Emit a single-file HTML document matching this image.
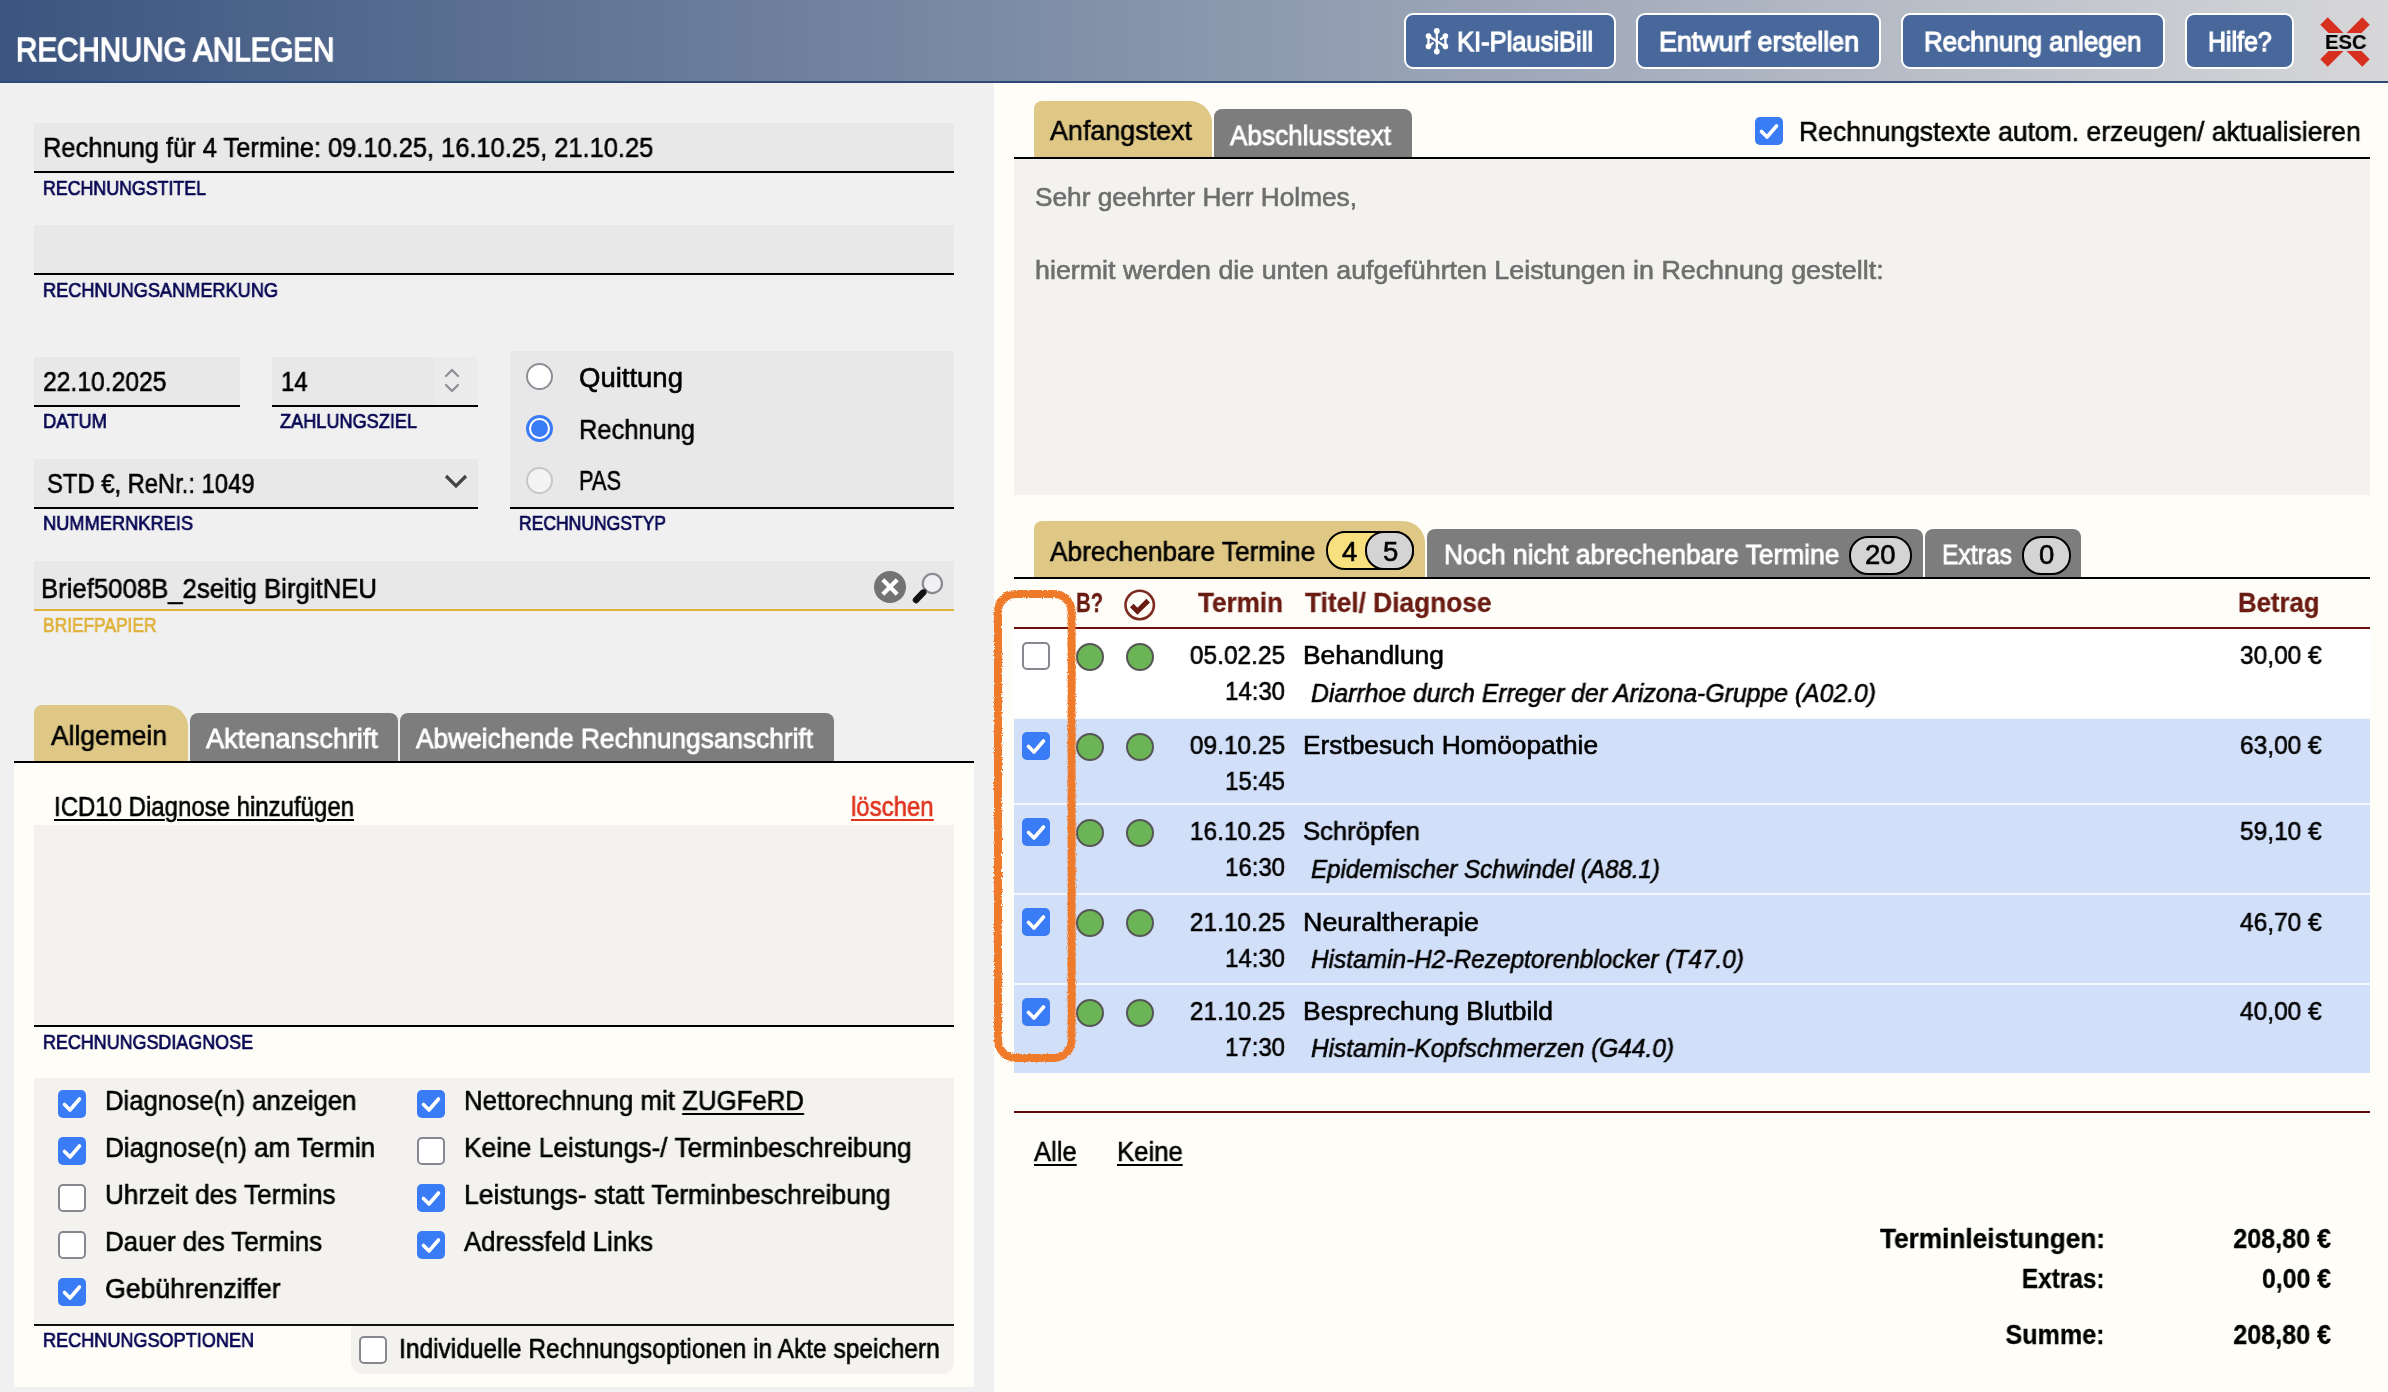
<!DOCTYPE html><html><head><meta charset="utf-8"><style>
html,body{margin:0;padding:0;width:2388px;height:1392px;overflow:hidden;font-family:"Liberation Sans",sans-serif;}
body{position:relative;background:#fefdf8;}
div{box-sizing:content-box;}
u{text-decoration:underline;text-decoration-thickness:2px;text-underline-offset:3px;}
</style></head><body>
<div style="position:absolute;left:0px;top:0px;width:2388px;height:81px;background:linear-gradient(90deg,#3b5580 0%,#d7d7d9 100%);"></div>
<div style="position:absolute;left:0px;top:81px;width:2388px;height:2px;background:#2d4a76;"></div>
<div style="position:absolute;left:15.8px;top:33.4px;font:normal 400 33.5px/33.5px 'Liberation Sans',sans-serif;color:#fff;white-space:pre;will-change:transform;transform:scaleX(0.8816);transform-origin:left center;-webkit-text-stroke:1.5px #fff;">RECHNUNG ANLEGEN</div>
<div style="position:absolute;left:1404px;top:13px;width:208px;height:52px;background:#48679a;border:2px solid #fff;border-radius:9px;"></div>
<div style="position:absolute;left:1457.0px;top:27.3px;font:normal 400 28.5px/28.5px 'Liberation Sans',sans-serif;color:#fff;white-space:pre;will-change:transform;transform:scaleX(0.8945);transform-origin:left center;-webkit-text-stroke:1.25px #fff;">KI-PlausiBill</div>
<div style="position:absolute;left:1636px;top:13px;width:241px;height:52px;background:#48679a;border:2px solid #fff;border-radius:9px;"></div>
<div style="position:absolute;left:1659.0px;top:27.3px;font:normal 400 28.5px/28.5px 'Liberation Sans',sans-serif;color:#fff;white-space:pre;will-change:transform;transform:scaleX(0.9422);transform-origin:left center;-webkit-text-stroke:1.25px #fff;">Entwurf erstellen</div>
<div style="position:absolute;left:1901px;top:13px;width:260px;height:52px;background:#48679a;border:2px solid #fff;border-radius:9px;"></div>
<div style="position:absolute;left:1924.3px;top:27.3px;font:normal 400 28.5px/28.5px 'Liberation Sans',sans-serif;color:#fff;white-space:pre;will-change:transform;transform:scaleX(0.9085);transform-origin:left center;-webkit-text-stroke:1.25px #fff;">Rechnung anlegen</div>
<div style="position:absolute;left:2185px;top:13px;width:105px;height:52px;background:#48679a;border:2px solid #fff;border-radius:9px;"></div>
<div style="position:absolute;left:2208.3px;top:27.3px;font:normal 400 28.5px/28.5px 'Liberation Sans',sans-serif;color:#fff;white-space:pre;will-change:transform;transform:scaleX(0.8729);transform-origin:left center;-webkit-text-stroke:1.25px #fff;">Hilfe?</div>
<svg style="position:absolute;left:1418px;top:22px" width="40" height="40" viewBox="0 0 40 40">
<g stroke="#fff" stroke-width="2.3" fill="none" stroke-linecap="round">
<path d="M18.8 9 L18.8 29.5"/><path d="M10.5 14.1 L10.5 24.4"/><path d="M27.4 14.1 L27.4 24.4"/><path d="M10.5 14.1 L27.4 24.4"/><path d="M10.5 24.4 L14.8 21.2"/><path d="M27.4 14.1 L23 17"/>
</g>
<g fill="#fff"><circle cx="18.8" cy="8.9" r="2.9"/><circle cx="18.8" cy="29.5" r="2.9"/><circle cx="10.5" cy="14.1" r="2.8"/><circle cx="27.4" cy="14.1" r="2.8"/><circle cx="10.5" cy="24.4" r="2.8"/><circle cx="27.4" cy="24.4" r="2.8"/></g>
</svg>
<svg style="position:absolute;left:2319px;top:16px" width="52" height="52" viewBox="0 0 52 52">
<path d="M5 5 L47 47 M47 5 L5 47" stroke="#d8301f" stroke-width="10.5"/>
</svg>
<div style="position:absolute;left:2322px;top:33px;width:46px;height:18px;background:#d4d4d7;"></div>
<div style="position:absolute;left:2324.6px;top:31.2px;font:normal 700 21px/21px 'Liberation Sans',sans-serif;color:#000;white-space:pre;will-change:transform;transform:scaleX(0.9611);transform-origin:left center;-webkit-text-stroke:0.2px #000;">ESC</div>
<div style="position:absolute;left:0px;top:83px;width:994px;height:1309px;background:#f0f0f1;"></div>
<div style="position:absolute;left:34px;top:123px;width:920px;height:48px;background:#e8e8e8;"></div>
<div style="position:absolute;left:34px;top:171px;width:920px;height:2px;background:#000;"></div>
<div style="position:absolute;left:42.6px;top:134.1px;font:normal 400 27.5px/27.5px 'Liberation Sans',sans-serif;color:#000;white-space:pre;will-change:transform;transform:scaleX(0.9246);transform-origin:left center;-webkit-text-stroke:0.6px #000;">Rechnung für 4 Termine: 09.10.25, 16.10.25, 21.10.25</div>
<div style="position:absolute;left:42.6px;top:177.8px;font:normal 400 20.5px/20.5px 'Liberation Sans',sans-serif;color:#050552;white-space:pre;will-change:transform;transform:scaleX(0.8673);transform-origin:left center;-webkit-text-stroke:0.7px #050552;">RECHNUNGSTITEL</div>
<div style="position:absolute;left:34px;top:225px;width:920px;height:48px;background:#e8e8e8;"></div>
<div style="position:absolute;left:34px;top:273px;width:920px;height:2px;background:#000;"></div>
<div style="position:absolute;left:42.6px;top:280.0px;font:normal 400 20.5px/20.5px 'Liberation Sans',sans-serif;color:#050552;white-space:pre;will-change:transform;transform:scaleX(0.8855);transform-origin:left center;-webkit-text-stroke:0.7px #050552;">RECHNUNGSANMERKUNG</div>
<div style="position:absolute;left:34px;top:357px;width:206px;height:48px;background:#e8e8e8;"></div>
<div style="position:absolute;left:34px;top:405px;width:206px;height:2px;background:#000;"></div>
<div style="position:absolute;left:42.5px;top:367.9px;font:normal 400 27.5px/27.5px 'Liberation Sans',sans-serif;color:#000;white-space:pre;will-change:transform;transform:scaleX(0.8973);transform-origin:left center;-webkit-text-stroke:0.6px #000;">22.10.2025</div>
<div style="position:absolute;left:42.6px;top:411.0px;font:normal 400 20.5px/20.5px 'Liberation Sans',sans-serif;color:#050552;white-space:pre;will-change:transform;transform:scaleX(0.8969);transform-origin:left center;-webkit-text-stroke:0.7px #050552;">DATUM</div>
<div style="position:absolute;left:272px;top:357px;width:206px;height:48px;background:#e8e8e8;"></div>
<div style="position:absolute;left:272px;top:405px;width:206px;height:2px;background:#000;"></div>
<div style="position:absolute;left:434px;top:357px;width:44px;height:48px;background:#ebebec;"></div>
<div style="position:absolute;left:281.0px;top:367.9px;font:normal 400 27.5px/27.5px 'Liberation Sans',sans-serif;color:#000;white-space:pre;will-change:transform;transform:scaleX(0.8761);transform-origin:left center;-webkit-text-stroke:0.6px #000;">14</div>
<svg style="position:absolute;left:444px;top:366px" width="16" height="30" viewBox="0 0 16 30"><path d="M2 10 L8 4 L14 10 M2 19 L8 25 L14 19" fill="none" stroke="#8d8d96" stroke-width="2.2" stroke-linecap="round" stroke-linejoin="round"/></svg>
<div style="position:absolute;left:280.3px;top:411.0px;font:normal 400 20.5px/20.5px 'Liberation Sans',sans-serif;color:#050552;white-space:pre;will-change:transform;transform:scaleX(0.8843);transform-origin:left center;-webkit-text-stroke:0.7px #050552;">ZAHLUNGSZIEL</div>
<div style="position:absolute;left:34px;top:459px;width:444px;height:48px;background:#e8e8e8;"></div>
<div style="position:absolute;left:34px;top:507px;width:444px;height:2px;background:#000;"></div>
<div style="position:absolute;left:46.5px;top:469.9px;font:normal 400 27.5px/27.5px 'Liberation Sans',sans-serif;color:#000;white-space:pre;will-change:transform;transform:scaleX(0.8647);transform-origin:left center;-webkit-text-stroke:0.6px #000;">STD €, ReNr.: 1049</div>
<svg style="position:absolute;left:443px;top:472px" width="26" height="20" viewBox="0 0 26 20"><path d="M3 4 L13 14 L23 4" fill="none" stroke="#444" stroke-width="3.2"/></svg>
<div style="position:absolute;left:42.6px;top:513.1px;font:normal 400 20.5px/20.5px 'Liberation Sans',sans-serif;color:#050552;white-space:pre;will-change:transform;transform:scaleX(0.8899);transform-origin:left center;-webkit-text-stroke:0.7px #050552;">NUMMERNKREIS</div>
<div style="position:absolute;left:510px;top:351px;width:444px;height:156px;background:#e8e8e8;"></div>
<div style="position:absolute;left:510px;top:507px;width:444px;height:2px;background:#000;"></div>
<div style="position:absolute;left:526px;top:363px;width:23px;height:23px;border:2px solid #8e8e96;border-radius:50%;background:#fff"></div>
<div style="position:absolute;left:526px;top:415px;width:21px;height:21px;border:3px solid #3a7bf6;border-radius:50%;background:#fff"><div style="position:absolute;left:2px;top:2px;width:17px;height:17px;border-radius:50%;background:#3a7bf6"></div></div>
<div style="position:absolute;left:526px;top:467px;width:23px;height:23px;border:2px solid #c6c6cb;border-radius:50%;background:#f4f4f4"></div>
<div style="position:absolute;left:578.8px;top:363.8px;font:normal 400 27.5px/27.5px 'Liberation Sans',sans-serif;color:#000;white-space:pre;will-change:transform;-webkit-text-stroke:0.6px #000;">Quittung</div>
<div style="position:absolute;left:578.8px;top:415.6px;font:normal 400 27.5px/27.5px 'Liberation Sans',sans-serif;color:#000;white-space:pre;will-change:transform;transform:scaleX(0.9252);transform-origin:left center;-webkit-text-stroke:0.6px #000;">Rechnung</div>
<div style="position:absolute;left:578.8px;top:467.3px;font:normal 400 27.5px/27.5px 'Liberation Sans',sans-serif;color:#000;white-space:pre;will-change:transform;transform:scaleX(0.7927);transform-origin:left center;-webkit-text-stroke:0.6px #000;">PAS</div>
<div style="position:absolute;left:519.0px;top:513.1px;font:normal 400 20.5px/20.5px 'Liberation Sans',sans-serif;color:#050552;white-space:pre;will-change:transform;transform:scaleX(0.8547);transform-origin:left center;-webkit-text-stroke:0.7px #050552;">RECHNUNGSTYP</div>
<div style="position:absolute;left:34px;top:561px;width:920px;height:48px;background:#e8e8e8;"></div>
<div style="position:absolute;left:34px;top:609px;width:920px;height:2px;background:#e0b038;"></div>
<div style="position:absolute;left:40.7px;top:575.1px;font:normal 400 27.5px/27.5px 'Liberation Sans',sans-serif;color:#000;white-space:pre;will-change:transform;transform:scaleX(0.9354);transform-origin:left center;-webkit-text-stroke:0.6px #000;">Brief5008B_2seitig BirgitNEU</div>
<svg style="position:absolute;left:873px;top:570px" width="34" height="34" viewBox="0 0 34 34"><circle cx="17" cy="17" r="16" fill="#737373"/><path d="M9.8 9.8 L24.2 24.2 M24.2 9.8 L9.8 24.2" stroke="#fff" stroke-width="4.2"/></svg>
<svg style="position:absolute;left:910px;top:570px" width="36" height="36" viewBox="0 0 36 36"><circle cx="22.4" cy="13.5" r="9.6" fill="#f1f1f4" stroke="#8a8a90" stroke-width="2.2"/><path d="M13.6 22.1 L16.3 19.4" stroke="#555" stroke-width="3"/><path d="M6 30 L13.2 22.6" stroke="#111" stroke-width="6.5" stroke-linecap="round"/></svg>
<div style="position:absolute;left:43.0px;top:615.3px;font:normal 400 20.5px/20.5px 'Liberation Sans',sans-serif;color:#e0b038;white-space:pre;will-change:transform;transform:scaleX(0.8468);transform-origin:left center;-webkit-text-stroke:0.7px #e0b038;">BRIEFPAPIER</div>
<div style="position:absolute;left:34px;top:705px;width:154px;height:56px;background:#dfc885;border-radius:8px 22px 0 0"></div>
<div style="position:absolute;left:50.5px;top:721.6px;font:normal 400 27.5px/27.5px 'Liberation Sans',sans-serif;color:#000;white-space:pre;will-change:transform;transform:scaleX(0.9606);transform-origin:left center;-webkit-text-stroke:0.6px #000;">Allgemein</div>
<div style="position:absolute;left:190px;top:713px;width:208px;height:48px;background:#7d7d7d;border-radius:8px 8px 0 0"></div>
<div style="position:absolute;left:205.8px;top:725.2px;font:normal 400 27.5px/27.5px 'Liberation Sans',sans-serif;color:#fff;white-space:pre;will-change:transform;transform:scaleX(0.9871);transform-origin:left center;-webkit-text-stroke:0.8px #fff;">Aktenanschrift</div>
<div style="position:absolute;left:400px;top:713px;width:434px;height:48px;background:#7d7d7d;border-radius:8px 8px 0 0"></div>
<div style="position:absolute;left:416.4px;top:725.2px;font:normal 400 27.5px/27.5px 'Liberation Sans',sans-serif;color:#fff;white-space:pre;will-change:transform;transform:scaleX(0.9547);transform-origin:left center;-webkit-text-stroke:0.8px #fff;">Abweichende Rechnungsanschrift</div>
<div style="position:absolute;left:14px;top:761px;width:960px;height:2px;background:#000;"></div>
<div style="position:absolute;left:14px;top:763px;width:960px;height:624px;background:#fefdf8;"></div>
<div style="position:absolute;left:54.2px;top:793.2px;font:normal 400 27.5px/27.5px 'Liberation Sans',sans-serif;color:#000;white-space:pre;will-change:transform;transform:scaleX(0.8721);transform-origin:left center;-webkit-text-stroke:0.6px #000;"><u>ICD10 Diagnose hinzufügen</u></div>
<div style="position:absolute;left:851.0px;top:793.4px;font:normal 400 27.5px/27.5px 'Liberation Sans',sans-serif;color:#e0341e;white-space:pre;will-change:transform;transform:scaleX(0.8704);transform-origin:left center;-webkit-text-stroke:0.6px #e0341e;"><u>löschen</u></div>
<div style="position:absolute;left:34px;top:825px;width:920px;height:200px;background:#f3f2ef;"></div>
<div style="position:absolute;left:34px;top:1025px;width:920px;height:2px;background:#000;"></div>
<div style="position:absolute;left:43.1px;top:1031.7px;font:normal 400 20.5px/20.5px 'Liberation Sans',sans-serif;color:#050552;white-space:pre;will-change:transform;transform:scaleX(0.8738);transform-origin:left center;-webkit-text-stroke:0.7px #050552;">RECHNUNGSDIAGNOSE</div>
<div style="position:absolute;left:34px;top:1078px;width:920px;height:246px;background:#f3f2ef;"></div>
<div style="position:absolute;left:34px;top:1324px;width:920px;height:2px;background:#111;"></div>
<div style="position:absolute;left:58px;top:1090.0px;width:28px;height:28px;background:#3a7bf6;border-radius:5px;"><svg width="28" height="28" viewBox="0 0 28 28" style="position:absolute;left:0;top:0"><path d="M6.5 14.5 L12 20 L21.5 9" fill="none" stroke="#fff" stroke-width="3.6" stroke-linecap="round" stroke-linejoin="round"/></svg></div>
<div style="position:absolute;left:104.8px;top:1087.2px;font:normal 400 27.5px/27.5px 'Liberation Sans',sans-serif;color:#000;white-space:pre;will-change:transform;transform:scaleX(0.9343);transform-origin:left center;-webkit-text-stroke:0.6px #000;">Diagnose(n) anzeigen</div>
<div style="position:absolute;left:58px;top:1137.0px;width:28px;height:28px;background:#3a7bf6;border-radius:5px;"><svg width="28" height="28" viewBox="0 0 28 28" style="position:absolute;left:0;top:0"><path d="M6.5 14.5 L12 20 L21.5 9" fill="none" stroke="#fff" stroke-width="3.6" stroke-linecap="round" stroke-linejoin="round"/></svg></div>
<div style="position:absolute;left:104.8px;top:1134.2px;font:normal 400 27.5px/27.5px 'Liberation Sans',sans-serif;color:#000;white-space:pre;will-change:transform;transform:scaleX(0.9468);transform-origin:left center;-webkit-text-stroke:0.6px #000;">Diagnose(n) am Termin</div>
<div style="position:absolute;left:58px;top:1184.0px;width:24px;height:24px;background:#fff;border:2px solid #878791;border-radius:5px;"></div>
<div style="position:absolute;left:104.8px;top:1181.2px;font:normal 400 27.5px/27.5px 'Liberation Sans',sans-serif;color:#000;white-space:pre;will-change:transform;transform:scaleX(0.9507);transform-origin:left center;-webkit-text-stroke:0.6px #000;">Uhrzeit des Termins</div>
<div style="position:absolute;left:58px;top:1231.0px;width:24px;height:24px;background:#fff;border:2px solid #878791;border-radius:5px;"></div>
<div style="position:absolute;left:104.8px;top:1228.2px;font:normal 400 27.5px/27.5px 'Liberation Sans',sans-serif;color:#000;white-space:pre;will-change:transform;transform:scaleX(0.9429);transform-origin:left center;-webkit-text-stroke:0.6px #000;">Dauer des Termins</div>
<div style="position:absolute;left:58px;top:1278.0px;width:28px;height:28px;background:#3a7bf6;border-radius:5px;"><svg width="28" height="28" viewBox="0 0 28 28" style="position:absolute;left:0;top:0"><path d="M6.5 14.5 L12 20 L21.5 9" fill="none" stroke="#fff" stroke-width="3.6" stroke-linecap="round" stroke-linejoin="round"/></svg></div>
<div style="position:absolute;left:104.8px;top:1275.2px;font:normal 400 27.5px/27.5px 'Liberation Sans',sans-serif;color:#000;white-space:pre;will-change:transform;transform:scaleX(0.9680);transform-origin:left center;-webkit-text-stroke:0.6px #000;">Gebührenziffer</div>
<div style="position:absolute;left:417px;top:1090.0px;width:28px;height:28px;background:#3a7bf6;border-radius:5px;"><svg width="28" height="28" viewBox="0 0 28 28" style="position:absolute;left:0;top:0"><path d="M6.5 14.5 L12 20 L21.5 9" fill="none" stroke="#fff" stroke-width="3.6" stroke-linecap="round" stroke-linejoin="round"/></svg></div>
<div style="position:absolute;left:463.8px;top:1087.2px;font:normal 400 27.5px/27.5px 'Liberation Sans',sans-serif;color:#000;white-space:pre;will-change:transform;transform:scaleX(0.9387);transform-origin:left center;-webkit-text-stroke:0.6px #000;">Nettorechnung mit <u>ZUGFeRD</u></div>
<div style="position:absolute;left:417px;top:1137.0px;width:24px;height:24px;background:#fff;border:2px solid #878791;border-radius:5px;"></div>
<div style="position:absolute;left:463.8px;top:1134.2px;font:normal 400 27.5px/27.5px 'Liberation Sans',sans-serif;color:#000;white-space:pre;will-change:transform;transform:scaleX(0.9577);transform-origin:left center;-webkit-text-stroke:0.6px #000;">Keine Leistungs-/ Terminbeschreibung</div>
<div style="position:absolute;left:417px;top:1184.0px;width:28px;height:28px;background:#3a7bf6;border-radius:5px;"><svg width="28" height="28" viewBox="0 0 28 28" style="position:absolute;left:0;top:0"><path d="M6.5 14.5 L12 20 L21.5 9" fill="none" stroke="#fff" stroke-width="3.6" stroke-linecap="round" stroke-linejoin="round"/></svg></div>
<div style="position:absolute;left:463.8px;top:1181.2px;font:normal 400 27.5px/27.5px 'Liberation Sans',sans-serif;color:#000;white-space:pre;will-change:transform;transform:scaleX(0.9666);transform-origin:left center;-webkit-text-stroke:0.6px #000;">Leistungs- statt Terminbeschreibung</div>
<div style="position:absolute;left:417px;top:1231.0px;width:28px;height:28px;background:#3a7bf6;border-radius:5px;"><svg width="28" height="28" viewBox="0 0 28 28" style="position:absolute;left:0;top:0"><path d="M6.5 14.5 L12 20 L21.5 9" fill="none" stroke="#fff" stroke-width="3.6" stroke-linecap="round" stroke-linejoin="round"/></svg></div>
<div style="position:absolute;left:463.8px;top:1228.2px;font:normal 400 27.5px/27.5px 'Liberation Sans',sans-serif;color:#000;white-space:pre;will-change:transform;transform:scaleX(0.9367);transform-origin:left center;-webkit-text-stroke:0.6px #000;">Adressfeld Links</div>
<div style="position:absolute;left:43.1px;top:1330.1px;font:normal 400 20.5px/20.5px 'Liberation Sans',sans-serif;color:#050552;white-space:pre;will-change:transform;transform:scaleX(0.8822);transform-origin:left center;-webkit-text-stroke:0.7px #050552;">RECHNUNGSOPTIONEN</div>
<div style="position:absolute;left:351px;top:1326px;width:603px;height:48px;background:#f3f2ef;border-radius:0 0 12px 12px"></div>
<div style="position:absolute;left:359px;top:1336.0px;width:24px;height:24px;background:#fff;border:2px solid #878791;border-radius:5px;"></div>
<div style="position:absolute;left:398.5px;top:1334.5px;font:normal 400 27.5px/27.5px 'Liberation Sans',sans-serif;color:#000;white-space:pre;will-change:transform;transform:scaleX(0.8908);transform-origin:left center;-webkit-text-stroke:0.6px #000;">Individuelle Rechnungsoptionen in Akte speichern</div>
<div style="position:absolute;left:1034px;top:101px;width:178px;height:57px;background:#dfc885;border-radius:8px 22px 0 0"></div>
<div style="position:absolute;left:1050.0px;top:117.3px;font:normal 400 27.5px/27.5px 'Liberation Sans',sans-serif;color:#000;white-space:pre;will-change:transform;transform:scaleX(0.9777);transform-origin:left center;-webkit-text-stroke:0.6px #000;">Anfangstext</div>
<div style="position:absolute;left:1214px;top:109px;width:198px;height:49px;background:#7d7d7d;border-radius:8px 8px 0 0"></div>
<div style="position:absolute;left:1230.3px;top:121.5px;font:normal 400 27.5px/27.5px 'Liberation Sans',sans-serif;color:#fff;white-space:pre;will-change:transform;transform:scaleX(0.9490);transform-origin:left center;-webkit-text-stroke:0.8px #fff;">Abschlusstext</div>
<div style="position:absolute;left:1755px;top:116.8px;width:28px;height:28px;background:#3a7bf6;border-radius:5px;"><svg width="28" height="28" viewBox="0 0 28 28" style="position:absolute;left:0;top:0"><path d="M6.5 14.5 L12 20 L21.5 9" fill="none" stroke="#fff" stroke-width="3.6" stroke-linecap="round" stroke-linejoin="round"/></svg></div>
<div style="position:absolute;left:1799.2px;top:117.8px;font:normal 400 27.5px/27.5px 'Liberation Sans',sans-serif;color:#000;white-space:pre;will-change:transform;transform:scaleX(0.9644);transform-origin:left center;-webkit-text-stroke:0.6px #000;">Rechnungstexte autom. erzeugen/ aktualisieren</div>
<div style="position:absolute;left:1014px;top:157px;width:1356px;height:2px;background:#000;"></div>
<div style="position:absolute;left:1014px;top:159px;width:1356px;height:336px;background:#f3f2ef;"></div>
<div style="position:absolute;left:1034.6px;top:184.4px;font:normal 400 26.0px/26.0px 'Liberation Sans',sans-serif;color:#6e6e6e;white-space:pre;will-change:transform;transform:scaleX(1.0083);transform-origin:left center;-webkit-text-stroke:0.6px #6e6e6e;">Sehr geehrter Herr Holmes,</div>
<div style="position:absolute;left:1034.7px;top:256.6px;font:normal 400 26.0px/26.0px 'Liberation Sans',sans-serif;color:#6e6e6e;white-space:pre;will-change:transform;transform:scaleX(1.0318);transform-origin:left center;-webkit-text-stroke:0.6px #6e6e6e;">hiermit werden die unten aufgeführten Leistungen in Rechnung gestellt:</div>
<div style="position:absolute;left:1034px;top:521px;width:391px;height:57px;background:#dfc885;border-radius:8px 22px 0 0"></div>
<div style="position:absolute;left:1050.3px;top:537.6px;font:normal 400 27.5px/27.5px 'Liberation Sans',sans-serif;color:#000;white-space:pre;will-change:transform;transform:scaleX(0.9550);transform-origin:left center;-webkit-text-stroke:0.6px #000;">Abrechenbare Termine</div>
<div style="position:absolute;left:1325.6px;top:531.3px;width:84px;height:35px;background:#f9e07e;border:2px solid #000;border-radius:19px"></div>
<div style="position:absolute;left:1365.4px;top:531.3px;width:45px;height:35px;background:#d4d4d4;border:2px solid #000;border-radius:19px"></div>
<div style="position:absolute;left:1342.1px;top:537.6px;font:normal 400 27.5px/27.5px 'Liberation Sans',sans-serif;color:#000;white-space:pre;will-change:transform;-webkit-text-stroke:0.6px #000;">4</div>
<div style="position:absolute;left:1382.6px;top:537.6px;font:normal 400 27.5px/27.5px 'Liberation Sans',sans-serif;color:#000;white-space:pre;will-change:transform;-webkit-text-stroke:0.6px #000;">5</div>
<div style="position:absolute;left:1427px;top:529px;width:496px;height:49px;background:#7d7d7d;border-radius:8px 8px 0 0"></div>
<div style="position:absolute;left:1444.2px;top:541.3px;font:normal 400 27.5px/27.5px 'Liberation Sans',sans-serif;color:#fff;white-space:pre;will-change:transform;transform:scaleX(0.9590);transform-origin:left center;-webkit-text-stroke:0.8px #fff;">Noch nicht abrechenbare Termine</div>
<div style="position:absolute;left:1849.4px;top:535.6px;width:59px;height:35px;background:#d4d4d4;border:2px solid #000;border-radius:19px"></div>
<div style="position:absolute;left:1865.4px;top:541.3px;font:normal 400 27.5px/27.5px 'Liberation Sans',sans-serif;color:#000;white-space:pre;will-change:transform;-webkit-text-stroke:0.6px #000;">20</div>
<div style="position:absolute;left:1925.4px;top:529px;width:156px;height:49px;background:#7d7d7d;border-radius:8px 8px 0 0"></div>
<div style="position:absolute;left:1942.0px;top:541.3px;font:normal 400 27.5px/27.5px 'Liberation Sans',sans-serif;color:#fff;white-space:pre;will-change:transform;transform:scaleX(0.8982);transform-origin:left center;-webkit-text-stroke:0.8px #fff;">Extras</div>
<div style="position:absolute;left:2022.2px;top:535.6px;width:45px;height:35px;background:#d4d4d4;border:2px solid #000;border-radius:19px"></div>
<div style="position:absolute;left:2039.0px;top:541.3px;font:normal 400 27.5px/27.5px 'Liberation Sans',sans-serif;color:#000;white-space:pre;will-change:transform;-webkit-text-stroke:0.6px #000;">0</div>
<div style="position:absolute;left:1014px;top:577px;width:1356px;height:2px;background:#000;"></div>
<div style="position:absolute;right:1285.1px;top:589.8px;font:normal 700 27px/27px 'Liberation Sans',sans-serif;color:#6a1b12;white-space:pre;will-change:transform;transform:scaleX(0.7474);transform-origin:right center;-webkit-text-stroke:0.3px #6a1b12;">B?</div>
<svg style="position:absolute;left:1124px;top:589px;filter:blur(0.5px)" width="32" height="32" viewBox="0 0 32 32"><circle cx="15.7" cy="16" r="14.2" fill="none" stroke="#7c2b20" stroke-width="2.6"/><path d="M7.8 16.6 L13.4 22.3 L24.2 11.6" fill="none" stroke="#6a1b12" stroke-width="5"/></svg>
<div style="position:absolute;right:1105.0px;top:589.8px;font:normal 700 27px/27px 'Liberation Sans',sans-serif;color:#6a1b12;white-space:pre;will-change:transform;transform:scaleX(0.9658);transform-origin:right center;-webkit-text-stroke:0.3px #6a1b12;">Termin</div>
<div style="position:absolute;left:1304.5px;top:589.8px;font:normal 700 27px/27px 'Liberation Sans',sans-serif;color:#6a1b12;white-space:pre;will-change:transform;transform:scaleX(0.9737);transform-origin:left center;-webkit-text-stroke:0.3px #6a1b12;">Titel/ Diagnose</div>
<div style="position:absolute;right:68.6px;top:589.8px;font:normal 700 27px/27px 'Liberation Sans',sans-serif;color:#6a1b12;white-space:pre;will-change:transform;transform:scaleX(0.9530);transform-origin:right center;-webkit-text-stroke:0.3px #6a1b12;">Betrag</div>
<div style="position:absolute;left:1014px;top:627px;width:1356px;height:2px;background:#6b0f0a;"></div>
<div style="position:absolute;left:1014px;top:717.5px;width:1356px;height:1.5px;background:#eef1fb;"></div>
<div style="position:absolute;left:1014px;top:629px;width:1356px;height:88.5px;background:#ffffff;"></div>
<div style="position:absolute;left:1014px;top:717.5px;width:1356px;height:2.0px;background:#f4f6fd;"></div>
<div style="position:absolute;left:1022px;top:642.0px;width:24px;height:24px;background:#fff;border:2px solid #878791;border-radius:5px;"></div>
<div style="position:absolute;left:1075.7px;top:643.1px;width:24px;height:24px;border-radius:50%;background:#6cb556;border:2px solid #565656"></div>
<div style="position:absolute;left:1125.5px;top:643.1px;width:24px;height:24px;border-radius:50%;background:#6cb556;border:2px solid #565656"></div>
<div style="position:absolute;right:1103.2px;top:642.4px;font:normal 400 26.0px/26.0px 'Liberation Sans',sans-serif;color:#000;white-space:pre;will-change:transform;transform:scaleX(0.9426);transform-origin:right center;-webkit-text-stroke:0.6px #000;">05.02.25</div>
<div style="position:absolute;right:1103.2px;top:678.4px;font:normal 400 26.0px/26.0px 'Liberation Sans',sans-serif;color:#000;white-space:pre;will-change:transform;transform:scaleX(0.9222);transform-origin:right center;-webkit-text-stroke:0.6px #000;">14:30</div>
<div style="position:absolute;left:1302.8px;top:642.4px;font:normal 400 26.0px/26.0px 'Liberation Sans',sans-serif;color:#000;white-space:pre;will-change:transform;transform:scaleX(1.0159);transform-origin:left center;-webkit-text-stroke:0.6px #000;">Behandlung</div>
<div style="position:absolute;left:1310.5px;top:680.2px;font:italic 400 26.0px/26.0px 'Liberation Sans',sans-serif;color:#000;white-space:pre;will-change:transform;transform:scaleX(0.9530);transform-origin:left center;-webkit-text-stroke:0.6px #000;">Diarrhoe durch Erreger der Arizona-Gruppe (A02.0)</div>
<div style="position:absolute;right:66.4px;top:642.4px;font:normal 400 26.0px/26.0px 'Liberation Sans',sans-serif;color:#000;white-space:pre;will-change:transform;transform:scaleX(0.9430);transform-origin:right center;-webkit-text-stroke:0.6px #000;">30,00 €</div>
<div style="position:absolute;left:1014px;top:719px;width:1356px;height:84px;background:#d2dff8;"></div>
<div style="position:absolute;left:1014px;top:803px;width:1356px;height:2px;background:#f4f6fd;"></div>
<div style="position:absolute;left:1022px;top:731.7px;width:28px;height:28px;background:#3a7bf6;border-radius:5px;"><svg width="28" height="28" viewBox="0 0 28 28" style="position:absolute;left:0;top:0"><path d="M6.5 14.5 L12 20 L21.5 9" fill="none" stroke="#fff" stroke-width="3.6" stroke-linecap="round" stroke-linejoin="round"/></svg></div>
<div style="position:absolute;left:1075.7px;top:732.8px;width:24px;height:24px;border-radius:50%;background:#6cb556;border:2px solid #565656"></div>
<div style="position:absolute;left:1125.5px;top:732.8px;width:24px;height:24px;border-radius:50%;background:#6cb556;border:2px solid #565656"></div>
<div style="position:absolute;right:1103.2px;top:732.4px;font:normal 400 26.0px/26.0px 'Liberation Sans',sans-serif;color:#000;white-space:pre;will-change:transform;transform:scaleX(0.9426);transform-origin:right center;-webkit-text-stroke:0.6px #000;">09.10.25</div>
<div style="position:absolute;right:1103.2px;top:768.4px;font:normal 400 26.0px/26.0px 'Liberation Sans',sans-serif;color:#000;white-space:pre;will-change:transform;transform:scaleX(0.9222);transform-origin:right center;-webkit-text-stroke:0.6px #000;">15:45</div>
<div style="position:absolute;left:1302.8px;top:732.4px;font:normal 400 26.0px/26.0px 'Liberation Sans',sans-serif;color:#000;white-space:pre;will-change:transform;transform:scaleX(1.0105);transform-origin:left center;-webkit-text-stroke:0.6px #000;">Erstbesuch Homöopathie</div>
<div style="position:absolute;right:66.4px;top:732.4px;font:normal 400 26.0px/26.0px 'Liberation Sans',sans-serif;color:#000;white-space:pre;will-change:transform;transform:scaleX(0.9430);transform-origin:right center;-webkit-text-stroke:0.6px #000;">63,00 €</div>
<div style="position:absolute;left:1014px;top:805px;width:1356px;height:88px;background:#d2dff8;"></div>
<div style="position:absolute;left:1014px;top:893px;width:1356px;height:2px;background:#f4f6fd;"></div>
<div style="position:absolute;left:1022px;top:817.7px;width:28px;height:28px;background:#3a7bf6;border-radius:5px;"><svg width="28" height="28" viewBox="0 0 28 28" style="position:absolute;left:0;top:0"><path d="M6.5 14.5 L12 20 L21.5 9" fill="none" stroke="#fff" stroke-width="3.6" stroke-linecap="round" stroke-linejoin="round"/></svg></div>
<div style="position:absolute;left:1075.7px;top:818.8px;width:24px;height:24px;border-radius:50%;background:#6cb556;border:2px solid #565656"></div>
<div style="position:absolute;left:1125.5px;top:818.8px;width:24px;height:24px;border-radius:50%;background:#6cb556;border:2px solid #565656"></div>
<div style="position:absolute;right:1103.2px;top:818.1px;font:normal 400 26.0px/26.0px 'Liberation Sans',sans-serif;color:#000;white-space:pre;will-change:transform;transform:scaleX(0.9426);transform-origin:right center;-webkit-text-stroke:0.6px #000;">16.10.25</div>
<div style="position:absolute;right:1103.2px;top:854.1px;font:normal 400 26.0px/26.0px 'Liberation Sans',sans-serif;color:#000;white-space:pre;will-change:transform;transform:scaleX(0.9222);transform-origin:right center;-webkit-text-stroke:0.6px #000;">16:30</div>
<div style="position:absolute;left:1302.8px;top:818.1px;font:normal 400 26.0px/26.0px 'Liberation Sans',sans-serif;color:#000;white-space:pre;will-change:transform;transform:scaleX(0.9871);transform-origin:left center;-webkit-text-stroke:0.6px #000;">Schröpfen</div>
<div style="position:absolute;left:1310.5px;top:855.6px;font:italic 400 26.0px/26.0px 'Liberation Sans',sans-serif;color:#000;white-space:pre;will-change:transform;transform:scaleX(0.9289);transform-origin:left center;-webkit-text-stroke:0.6px #000;">Epidemischer Schwindel (A88.1)</div>
<div style="position:absolute;right:66.4px;top:818.1px;font:normal 400 26.0px/26.0px 'Liberation Sans',sans-serif;color:#000;white-space:pre;will-change:transform;transform:scaleX(0.9430);transform-origin:right center;-webkit-text-stroke:0.6px #000;">59,10 €</div>
<div style="position:absolute;left:1014px;top:895px;width:1356px;height:88px;background:#d2dff8;"></div>
<div style="position:absolute;left:1014px;top:983px;width:1356px;height:2px;background:#f4f6fd;"></div>
<div style="position:absolute;left:1022px;top:908.0px;width:28px;height:28px;background:#3a7bf6;border-radius:5px;"><svg width="28" height="28" viewBox="0 0 28 28" style="position:absolute;left:0;top:0"><path d="M6.5 14.5 L12 20 L21.5 9" fill="none" stroke="#fff" stroke-width="3.6" stroke-linecap="round" stroke-linejoin="round"/></svg></div>
<div style="position:absolute;left:1075.7px;top:909.1px;width:24px;height:24px;border-radius:50%;background:#6cb556;border:2px solid #565656"></div>
<div style="position:absolute;left:1125.5px;top:909.1px;width:24px;height:24px;border-radius:50%;background:#6cb556;border:2px solid #565656"></div>
<div style="position:absolute;right:1103.2px;top:908.7px;font:normal 400 26.0px/26.0px 'Liberation Sans',sans-serif;color:#000;white-space:pre;will-change:transform;transform:scaleX(0.9426);transform-origin:right center;-webkit-text-stroke:0.6px #000;">21.10.25</div>
<div style="position:absolute;right:1103.2px;top:944.7px;font:normal 400 26.0px/26.0px 'Liberation Sans',sans-serif;color:#000;white-space:pre;will-change:transform;transform:scaleX(0.9222);transform-origin:right center;-webkit-text-stroke:0.6px #000;">14:30</div>
<div style="position:absolute;left:1302.8px;top:908.7px;font:normal 400 26.0px/26.0px 'Liberation Sans',sans-serif;color:#000;white-space:pre;will-change:transform;transform:scaleX(1.0320);transform-origin:left center;-webkit-text-stroke:0.6px #000;">Neuraltherapie</div>
<div style="position:absolute;left:1310.5px;top:946.2px;font:italic 400 26.0px/26.0px 'Liberation Sans',sans-serif;color:#000;white-space:pre;will-change:transform;transform:scaleX(0.9394);transform-origin:left center;-webkit-text-stroke:0.6px #000;">Histamin-H2-Rezeptorenblocker (T47.0)</div>
<div style="position:absolute;right:66.4px;top:908.7px;font:normal 400 26.0px/26.0px 'Liberation Sans',sans-serif;color:#000;white-space:pre;will-change:transform;transform:scaleX(0.9430);transform-origin:right center;-webkit-text-stroke:0.6px #000;">46,70 €</div>
<div style="position:absolute;left:1014px;top:985px;width:1356px;height:88px;background:#d2dff8;"></div>
<div style="position:absolute;left:1022px;top:997.9px;width:28px;height:28px;background:#3a7bf6;border-radius:5px;"><svg width="28" height="28" viewBox="0 0 28 28" style="position:absolute;left:0;top:0"><path d="M6.5 14.5 L12 20 L21.5 9" fill="none" stroke="#fff" stroke-width="3.6" stroke-linecap="round" stroke-linejoin="round"/></svg></div>
<div style="position:absolute;left:1075.7px;top:999.0px;width:24px;height:24px;border-radius:50%;background:#6cb556;border:2px solid #565656"></div>
<div style="position:absolute;left:1125.5px;top:999.0px;width:24px;height:24px;border-radius:50%;background:#6cb556;border:2px solid #565656"></div>
<div style="position:absolute;right:1103.2px;top:997.9px;font:normal 400 26.0px/26.0px 'Liberation Sans',sans-serif;color:#000;white-space:pre;will-change:transform;transform:scaleX(0.9426);transform-origin:right center;-webkit-text-stroke:0.6px #000;">21.10.25</div>
<div style="position:absolute;right:1103.2px;top:1033.9px;font:normal 400 26.0px/26.0px 'Liberation Sans',sans-serif;color:#000;white-space:pre;will-change:transform;transform:scaleX(0.9222);transform-origin:right center;-webkit-text-stroke:0.6px #000;">17:30</div>
<div style="position:absolute;left:1302.8px;top:997.9px;font:normal 400 26.0px/26.0px 'Liberation Sans',sans-serif;color:#000;white-space:pre;will-change:transform;transform:scaleX(1.0174);transform-origin:left center;-webkit-text-stroke:0.6px #000;">Besprechung Blutbild</div>
<div style="position:absolute;left:1310.5px;top:1035.4px;font:italic 400 26.0px/26.0px 'Liberation Sans',sans-serif;color:#000;white-space:pre;will-change:transform;transform:scaleX(0.9409);transform-origin:left center;-webkit-text-stroke:0.6px #000;">Histamin-Kopfschmerzen (G44.0)</div>
<div style="position:absolute;right:66.4px;top:997.9px;font:normal 400 26.0px/26.0px 'Liberation Sans',sans-serif;color:#000;white-space:pre;will-change:transform;transform:scaleX(0.9430);transform-origin:right center;-webkit-text-stroke:0.6px #000;">40,00 €</div>
<svg style="position:absolute;left:985px;top:580px" width="100" height="495" viewBox="0 0 100 495">
<defs><filter id="rough" x="-10%" y="-5%" width="120%" height="110%"><feTurbulence type="fractalNoise" baseFrequency="0.8" numOctaves="2" seed="3" result="n"/><feDisplacementMap in="SourceGraphic" in2="n" scale="3.2" xChannelSelector="R" yChannelSelector="G"/></filter></defs>
<rect x="13" y="14" width="73.6" height="464" rx="18" ry="18" fill="none" stroke="#ee7a2c" stroke-width="8" filter="url(#rough)"/>
</svg>
<div style="position:absolute;left:1014px;top:1111px;width:1356px;height:2px;background:#5c0b06;"></div>
<div style="position:absolute;left:1034.2px;top:1137.5px;font:normal 400 27.5px/27.5px 'Liberation Sans',sans-serif;color:#000;white-space:pre;will-change:transform;transform:scaleX(0.9312);transform-origin:left center;-webkit-text-stroke:0.6px #000;"><u>Alle</u></div>
<div style="position:absolute;left:1117.1px;top:1137.5px;font:normal 400 27.5px/27.5px 'Liberation Sans',sans-serif;color:#000;white-space:pre;will-change:transform;transform:scaleX(0.9355);transform-origin:left center;-webkit-text-stroke:0.6px #000;"><u>Keine</u></div>
<div style="position:absolute;right:283.0px;top:1225.8px;font:normal 700 27px/27px 'Liberation Sans',sans-serif;color:#000;white-space:pre;will-change:transform;transform:scaleX(0.9698);transform-origin:right center;-webkit-text-stroke:0.3px #000;">Terminleistungen:</div>
<div style="position:absolute;right:56.5px;top:1225.8px;font:normal 700 27px/27px 'Liberation Sans',sans-serif;color:#000;white-space:pre;will-change:transform;transform:scaleX(0.9305);transform-origin:right center;-webkit-text-stroke:0.3px #000;">208,80 €</div>
<div style="position:absolute;right:283.0px;top:1266.0px;font:normal 700 27px/27px 'Liberation Sans',sans-serif;color:#000;white-space:pre;will-change:transform;transform:scaleX(0.9034);transform-origin:right center;-webkit-text-stroke:0.3px #000;">Extras:</div>
<div style="position:absolute;right:56.5px;top:1266.0px;font:normal 700 27px/27px 'Liberation Sans',sans-serif;color:#000;white-space:pre;will-change:transform;transform:scaleX(0.9205);transform-origin:right center;-webkit-text-stroke:0.3px #000;">0,00 €</div>
<div style="position:absolute;right:283.0px;top:1321.6px;font:normal 700 27px/27px 'Liberation Sans',sans-serif;color:#000;white-space:pre;will-change:transform;transform:scaleX(0.9294);transform-origin:right center;-webkit-text-stroke:0.3px #000;">Summe:</div>
<div style="position:absolute;right:56.5px;top:1321.6px;font:normal 700 27px/27px 'Liberation Sans',sans-serif;color:#000;white-space:pre;will-change:transform;transform:scaleX(0.9305);transform-origin:right center;-webkit-text-stroke:0.3px #000;">208,80 €</div>
</body></html>
